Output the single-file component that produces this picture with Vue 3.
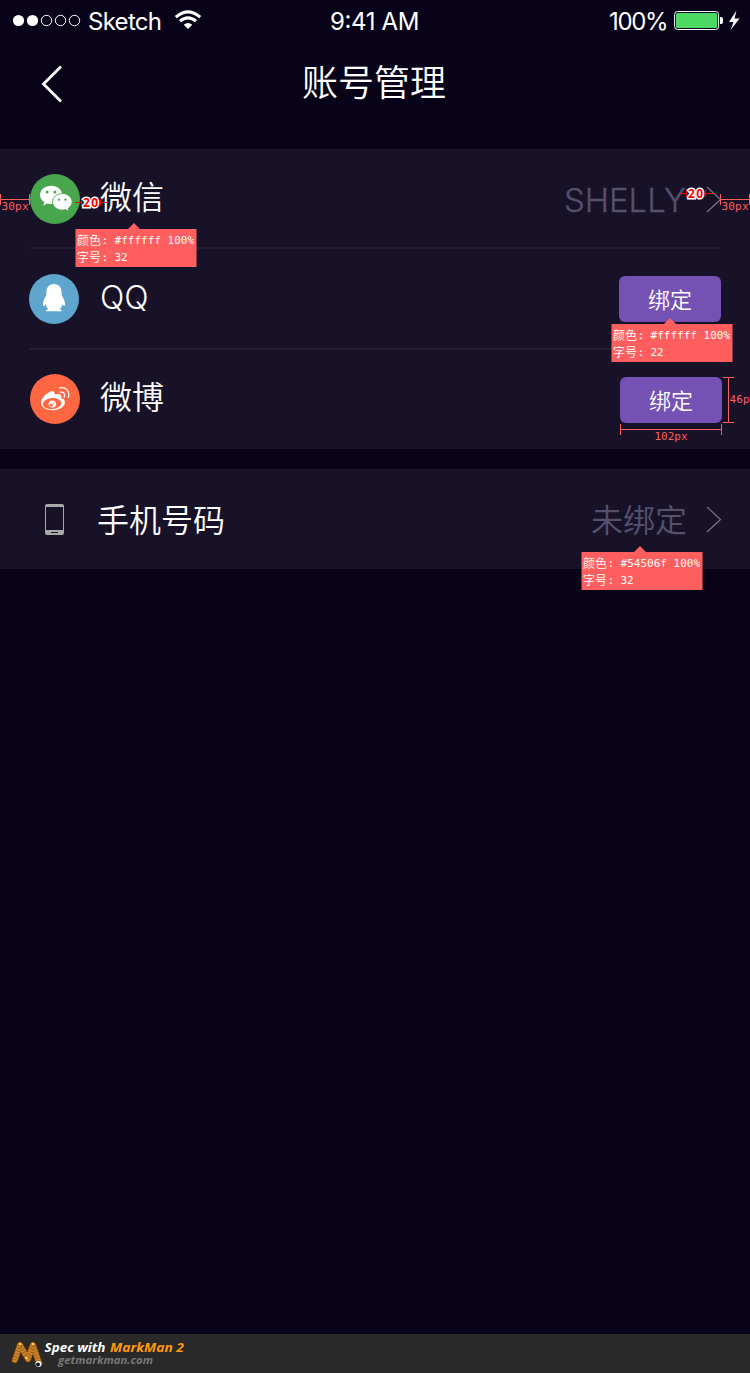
<script setup>
const tags = [
  { id: 'a', x: 75, y: 223, color: '#ffffff', size: '32' },
  { id: 'b', x: 611, y: 318, color: '#ffffff', size: '22' },
  { id: 'c', x: 581, y: 546, color: '#54506f', size: '32' },
]
</script>

<template>
  <div class="screen">
    <header class="status">
      <svg class="signal" width="70" height="14" viewBox="0 0 70 14">
        <circle cx="6.5" cy="6.5" r="5.6" fill="#fff" />
        <circle cx="20.5" cy="6.5" r="5.6" fill="#fff" />
        <g fill="none" stroke="#fff" stroke-width="1">
          <circle cx="34.5" cy="6.5" r="5.2" />
          <circle cx="48.5" cy="6.5" r="5.2" />
          <circle cx="62.5" cy="6.5" r="5.2" />
        </g>
      </svg>
      <svg class="carrier" width="76" height="30"><text x="0" y="22" textLength="74">Sketch</text></svg>
      <svg class="wifi" width="28" height="20" viewBox="0 0 28 20">
        <path d="M1.8 7.1Q14-3.3 26.2 7.1" fill="none" stroke="#fff" stroke-width="3.1" />
        <path d="M6 11.2Q14 4.5 22 11.2" fill="none" stroke="#fff" stroke-width="3" />
        <path d="M9.7 14.8Q14 11.1 18.3 14.8L14 19Z" fill="#fff" />
      </svg>
      <svg class="clock" width="92" height="30"><text x="0" y="22" textLength="89.5">9:41 AM</text></svg>
      <svg class="percent" width="62" height="30"><text x="1" y="22" textLength="59.5">100%</text></svg>
      <svg class="battery" width="68" height="22" viewBox="0 0 68 22">
        <rect x=".6" y="1.5" width="44" height="18" rx="3" fill="none" stroke="#fff" />
        <rect x="2" y="3" width="41.2" height="15" rx="1.5" fill="#4cd964" />
        <path d="M46 7h1q2 0 2 2v3q0 2-2 2h-1z" fill="#fff" />
        <path d="M62.5.5 55 12h4.6L56.5 20.2 65.5 8.5h-5z" fill="#fff" />
      </svg>
    </header>

    <nav class="titlebar">
      <svg class="back" width="24" height="40" viewBox="0 0 24 40">
        <path d="M21 3.5 3.5 21 21 38.5" fill="none" stroke="#fff" stroke-width="2.8" />
      </svg>
      <h1>账号管理</h1>
    </nav>

    <section class="panel">
      <div class="row">
        <svg class="logo" width="50" height="50" viewBox="0 0 50 50">
          <circle cx="25" cy="25" r="25" fill="#48a74c" />
          <path d="M21.2 11.8c-6.2 0-11.2 4.1-11.2 9.3 0 2.9 1.7 5.5 4.3 7.2l-1.1 3.2 4-2c1.3.4 2.6.6 4 .6 6.2 0 11.2-4 11.2-9s-5-9.3-11.2-9.3z" fill="#fff" />
          <path d="M32.3 19.5c-5.4 0-9.8 3.7-9.8 8.3s4.4 8.3 9.8 8.3c1.2 0 2.3-.2 3.3-.5l3.4 1.8-.9-3c2.4-1.6 4-3.9 4-6.6 0-4.6-4.4-8.3-9.8-8.3z" fill="#fff" stroke="#48a74c" stroke-width=".9" />
          <g fill="#48a74c"><circle cx="17.2" cy="18" r="1.5" /><circle cx="25" cy="18" r="1.5" /><circle cx="29" cy="25.7" r="1.15" /><circle cx="35.4" cy="25.7" r="1.15" /></g>
        </svg>
        <span class="name">微信</span>
        <svg class="value" width="126" height="40"><text x="-1" y="32.5" textLength="122" lengthAdjust="spacingAndGlyphs">SHELLY</text></svg>
        <svg class="arrow" width="16" height="28" viewBox="0 0 16 28"><path d="M1 2 14.5 14.5 1 27" /></svg>
      </div>
      <div class="row qq">
        <svg class="logo" width="50" height="50" viewBox="0 0 50 50">
          <circle cx="25" cy="25" r="25" fill="#5fa6cf" />
          <path d="M25 10c-5 0-7.7 3.600-7.600 8.500l-.1 2.800c-1.800 2.700-3.400 6.200-3.300 8.800 0 1.800.6 2.200 1.200 1.700l1.400-1.500c.4 2.200 1.300 3.800 2.800 5-2.400.4-3 1.600-1.900 2H32.500c1-.4.4-1.600-2-2 1.600-1.200 2.500-2.800 2.900-5l1.400 1.500c.6.500 1.200.1 1.200-1.700.1-2.600-1.500-6.100-3.300-8.800l-.1-2.800C32.700 13.600 30 10 25 10z" fill="#fff" />
        </svg>
        <span class="name latin">QQ</span>
        <button class="bind">绑定</button>
      </div>
      <div class="row weibo">
        <svg class="logo" width="50" height="50" viewBox="0 0 50 50">
          <circle cx="25" cy="25" r="25" fill="#ff6743" />
          <path fill="#fff" d="M11 28.800c0-4.600 6.600-11.600 11.300-11.600 2.200 0 2.700 1.500 2.200 3.300 2.500-.8 6.500-1.100 6.800 1.700.1.800-.5 1.500-.1 1.900.5.400 3.700 1.100 3.700 4.200 0 4.500-5.800 7.900-12 7.900-6.900 0-11.900-2.900-11.900-7.400z" />
          <ellipse cx="22" cy="29.6" rx="9.3" ry="5.5" fill="#ff6743" transform="rotate(-5 22 29)" />
          <ellipse cx="22.3" cy="30" rx="3.7" ry="3.6" fill="#fff" />
          <circle cx="21.3" cy="31" r="1.5" fill="#ff6743" />
          <circle cx="23.7" cy="29.2" r=".6" fill="#ff6743" />
          <g fill="none" stroke="#fff" stroke-linecap="round"><path d="M29.6 14c6.300-1.700 10.500 3.400 8.800 9.400" stroke-width="1.3" /><path d="M30.3 18.200c3.300-.7 5 1.700 4 4.800" stroke-width="1.3" /></g>
        </svg>
        <span class="name">微博</span>
        <button class="bind">绑定</button>
      </div>
    </section>

    <section class="panel phone">
      <div class="row">
        <svg class="handset" width="20" height="32" viewBox="0 0 20 32">
          <path fill="#a9a9a9" fill-rule="evenodd" d="M2 0h15q2 0 2 2v27q0 2-2 2H2q-2 0-2-2V2q0-2 2-2zM1 3v23h17V3zM6 28v1h7v-1z" />
        </svg>
        <span class="name">手机号码</span>
        <span class="unbound">未绑定</span>
        <svg class="arrow" width="16" height="28" viewBox="0 0 16 28"><path d="M1 2 14.5 14.5 1 27" /></svg>
      </div>
    </section>

    <footer class="credit">
      <svg width="200" height="39" viewBox="0 0 200 39">
        <g fill="none" stroke-linecap="round" stroke-linejoin="round">
          <path d="M15 26 20 11 28 25 33 11 39 29" stroke="#633000" stroke-width="7" />
          <path d="M15 26 20 11 28 25 33 11 39 29" stroke="#c9822a" stroke-width="5.5" />
          <path d="M15 26 20 11 28 25 33 11 39 29" stroke="#8a5218" stroke-width="5" stroke-dasharray=".6 2.4" stroke-linecap="butt" />
        </g>
        <g fill="#ffdf79"><circle cx="20" cy="10" r="1.1" /><circle cx="33" cy="10" r="1.1" /><circle cx="26.5" cy="24" r="1.2" /></g>
        <circle cx="38.5" cy="30" r="3" fill="#fff" /><circle cx="38" cy="30.5" r="1.9" fill="#111" />
        <g font-family="'Open Sans', sans-serif" font-style="italic" font-weight="700">
          <text x="44.5" y="18" font-size="12.5" fill="#fff" textLength="61" lengthAdjust="spacingAndGlyphs">Spec with</text>
          <text x="110" y="18" font-size="12.5" fill="#ff9711" textLength="74" lengthAdjust="spacingAndGlyphs">MarkMan 2</text>
          <text x="58" y="30.3" font-size="11" fill="#777" textLength="95" lengthAdjust="spacingAndGlyphs">getmarkman.com</text>
        </g>
      </svg>
    </footer>

    <svg class="marks" width="750" height="600" viewBox="0 0 750 600">
      <g v-for="t in tags" :key="t.id" :transform="`translate(${t.x} ${t.y})`">
        <path d="M.5 6H53L59 0 65 6H121.500V44H.5z" fill="#ff5e5e" />
        <g class="tagtext">
          <text x="2" y="21.5">颜色</text>
          <text class="mono" x="26.5" y="21">:</text>
          <text class="mono" x="39.5" y="21" textLength="79.5">{{ t.color }} 100%</text>
          <text x="2" y="38.8">字号</text>
          <text class="mono" x="26.5" y="38.3">:</text>
          <text class="mono" x="39.5" y="38.3" textLength="13">{{ t.size }}</text>
        </g>
      </g>
      <g fill="none" stroke="#ff5e5e">
        <path d="M0 199.500H30M.5 194v11M29.500 194v11M720 199.500h30M720.500 194v11M749.500 194v11" />
        <path d="M620 429.500h102M620.500 424v11M721.500 424v11M728.500 377v46M723 377.500h11M723 422.500h11" />
      </g>
      <g class="measure">
        <text x="1.5" y="210" textLength="27">30px</text>
        <text x="721.5" y="210" textLength="27">30px</text>
        <text x="654.5" y="440" textLength="33">102px</text>
        <text x="729.5" y="403" textLength="27">46px</text>
      </g>
      <g stroke="#f00" fill="none">
        <path d="M75 202.500h6M81.500 199v7M101 202.500h7M100.500 199v7" />
        <path d="M680 193.500h6M686.500 190v7M706 193.500h7M705.500 190v7" />
      </g>
      <g class="gap">
        <text x="83" y="207" textLength="15">20</text>
        <text x="688" y="198" textLength="15">20</text>
      </g>
    </svg>
  </div>
</template>

<style>
body { background: #090319; }
</style>

<style scoped>
* { box-sizing: border-box; }
svg { display: block; flex: none; }
.screen { position: relative; width: 750px; height: 1373px; overflow: hidden; background: #090319; color: #fff; font-family: "Noto Sans CJK SC", sans-serif; display: flex; flex-direction: column; }
.status { height: 40px; display: flex; align-items: flex-start; padding-top: 8px; font: 400 24px Inter, sans-serif; }
.status text { fill: #fff; }
.signal { margin: 6px 0 0 12px; }
.carrier { margin-left: 6px; }
.wifi { margin: 2px 0 0 10px; }
.clock { margin-left: 128px; }
.percent { margin-left: 186px; }
.battery { margin: 2px 0 0 4px; }
.titlebar { height: 109px; display: grid; grid-template-columns: 100px 1fr 100px; }
.back { margin: 23px 0 0 40px; }
h1 { margin: 13px 0 0; text-align: center; font-size: 36px; line-height: 54px; font-weight: 350; padding-right: 2px; }
.panel { background: #181228; }
.row { height: 100px; display: flex; align-items: center; padding: 0 28px 0 30px; position: relative; }
.row.qq { padding-right: 29px; padding-left: 29px; }
.row.qq::before, .row.weibo::before { content: ""; position: absolute; left: 30px; right: 30px; top: -2px; height: 2px; background: #231d32; }
.row.weibo::before { top: -1px; }
.name { margin: -9px auto 0 20px; font-size: 32px; line-height: 48px; font-weight: 350; }
.latin { font-family: Inter, sans-serif; font-weight: 300; margin-left: 21px; margin-top: -3px; letter-spacing: 0; }
.value { font: 300 33px "Liberation Sans", sans-serif; font-family: Inter, sans-serif; margin-right: 15px; overflow: visible; }
.value text { fill: #54506f; stroke: #54506f; stroke-width: .3; }
.arrow path { fill: none; stroke: #77747f; stroke-width: 1.2; }
.bind { width: 102px; height: 46px; border: 0; border-radius: 6px; padding: 0 0 2px; background: #7551b3; color: #fff; font: 350 22px/44px "Noto Sans CJK SC", sans-serif; }
.weibo .bind { margin-top: 2px; }
.phone { margin-top: 20px; }
.handset { margin: 2px 14px 0 15px; }
.phone .name { margin-top: -3px; margin-left: 18px; }
.unbound { color: #54506f; font-size: 32px; font-weight: 350; margin-top: -3px; margin-right: 19px; line-height: 48px; }
.credit { height: 39px; margin-top: auto; background: #292929; }
.marks { position: absolute; left: 0; top: 0; pointer-events: none; }
.tagtext { font: 350 12px "Noto Sans CJK SC", sans-serif; fill: #fff; }
.mono { font: 11px "DejaVu Sans Mono", monospace; }
.measure { font: 11px "DejaVu Sans Mono", monospace; fill: #ff5e5e; }
.gap { font: 700 12px "Open Sans", sans-serif; fill: #f00; stroke: #fff; stroke-width: 3px; paint-order: stroke; }
</style>
